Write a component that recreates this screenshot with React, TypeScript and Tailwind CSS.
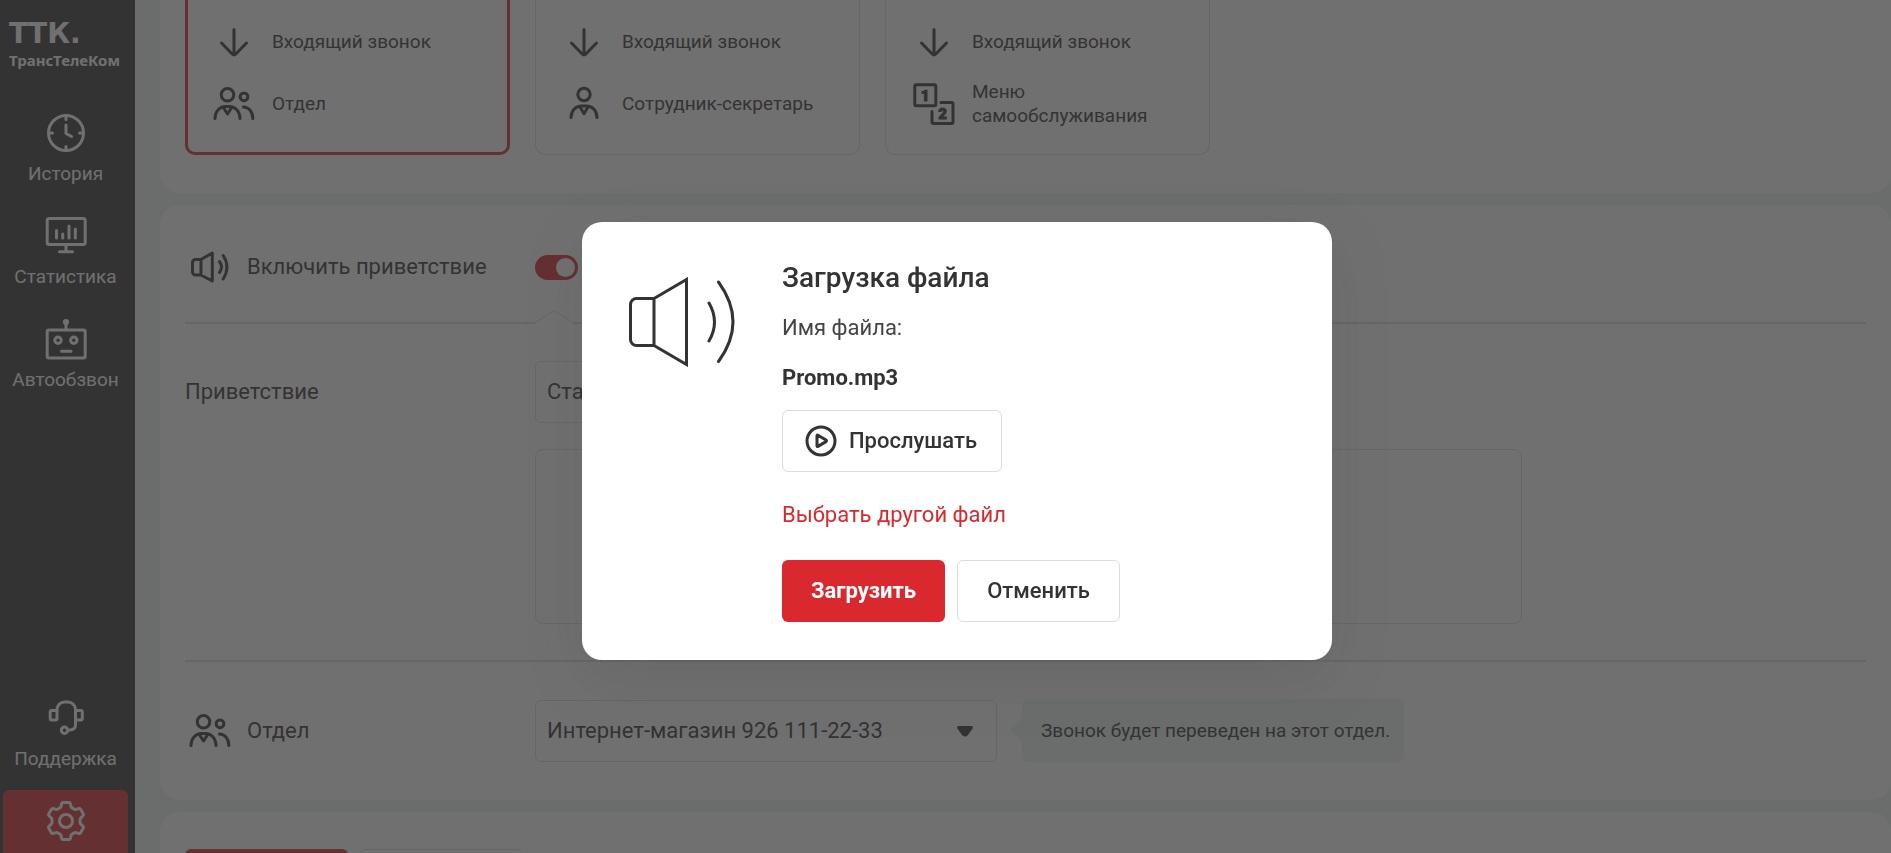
import type { ReactNode } from "react";

interface RouteCard {
    id: string;
    icon: () => ReactNode;
    title: string;
    selected?: boolean;
}

interface NavItem {
    icon: () => ReactNode;
    title: string;
}

function Icon({ children }: { children: ReactNode }) {
    return (
        <svg
            viewBox="0 0 42 42"
            className="h-[42px] w-[42px] shrink-0"
            fill="none"
            stroke="currentColor"
            strokeWidth="3"
            strokeLinecap="round"
            strokeLinejoin="round"
            aria-hidden="true"
        >
            {children}
        </svg>
    );
}

const ArrowIcon = () => (
    <Icon>
        <path d="M21 8.5V34M8.5 22l10.7 11q1.8 1.6 3.6 0L33.5 22" />
    </Icon>
);

const PeopleIcon = () => (
    <Icon>
        <circle cx="14.5" cy="11.8" r="6.3" />
        <circle cx="31" cy="13.8" r="3.9" />
        <path d="M2 35.5c0-7 4.6-12 10.5-12h4c5.9 0 10.5 5 10.5 12" />
        <path d="M10.3 24.5l4.200 6.5 4.200-6.5" />
        <path d="M30.500 24c5.500.3 9.300 5 9.300 11.500" />
    </Icon>
);

const PersonIcon = () => (
    <Icon>
        <circle cx="21" cy="11.5" r="6.2" />
        <path d="M8 34.5c0-6.8 4.600-11.500 10.500-11.500h5c5.900 0 10.500 4.700 10.500 11.500" />
        <path d="M17 24l4 6.800 4-6.800" />
    </Icon>
);

const MenuIcon = () => (
    <Icon>
        <rect x="1.8" y="1.8" width="21" height="21" rx="1.5" />
        <path d="M28 19.500h10.500a1.500 1.500 0 0 1 1.500 1.500v18a1.500 1.500 0 0 1-1.500 1.500h-18a1.500 1.500 0 0 1-1.500-1.500v-10.500" />
        <g fill="currentColor" strokeWidth="1" fontFamily="Roboto, sans-serif" fontSize="15" fontWeight="900" textAnchor="middle">
            <text x="12" y="17.5">1</text>
            <text x="29.5" y="35.5">2</text>
        </g>
    </Icon>
);

const SpeakerIcon = () => (
    <Icon>
        <path d="M12 13.500H6.500a3 3 0 0 0-3 3v9.500a3 3 0 0 0 3 3H12zM12 13.500L23.300 7v28L12 29z" />
        <path d="M30.500 15.500q4 5.500 0 11M34.200 9.500q7.500 11.500 0 23.500" />
    </Icon>
);

const ClockIcon = () => (
    <Icon>
        <circle cx="21" cy="21" r="17.5" />
        <path d="M21 13v8.500l5.500 3M21 4.500v3M21 34.500v3M4.500 21h3M34.500 21h3" />
    </Icon>
);

const StatsIcon = () => (
    <Icon>
        <rect x="2.2" y="3.5" width="38" height="26" rx="2" />
        <path d="M21 30v6M14.500 36.800h13M11.500 15.500v7.500M17.700 19v4M24 11v12M30.300 14v9" />
    </Icon>
);

const RobotIcon = () => (
    <Icon>
        <circle cx="21" cy="4" r="1.6" />
        <path d="M21 5v6M16.500 33.300h9.500" />
        <rect x="2.2" y="12" width="38" height="28" rx="1.5" />
        <circle cx="13" cy="22.3" r="3.2" />
        <circle cx="28.8" cy="22.3" r="3.2" />
    </Icon>
);

const HeadsetIcon = () => (
    <Icon>
        <path d="M12 14v-1.500a7.500 7.500 0 0 1 7.500-7.500h3.500a7.500 7.500 0 0 1 7.500 7.500V28c0 3.500-3 5.300-7.500 5.300" />
        <rect x="5.2" y="13.5" width="6.8" height="9.5" rx="1.5" />
        <rect x="30.5" y="13.5" width="6.8" height="9.5" rx="1.5" />
        <circle cx="19.5" cy="33.3" r="3.2" />
    </Icon>
);

const GearIcon = () => (
    <Icon>
        <path
            transform="translate(21 21)"
            d="M-3-18.500H3q1 0 1.300 1l.7 3q.3 1 1.200 1.500l2 1.100q1 .6 1.900.3l3-.9q1-.2 1.500.7l2.700 4.700q.5 1-.2 1.700l-2.300 2.200q-.8.700-.8 1.700V1.500q0 1 .8 1.700l2.300 2.200q.7.700.2 1.700l-2.700 4.700q-.5.900-1.500.7l-3-.9q-1-.3-1.900.3l-2 1.100q-.9.500-1.200 1.500l-.7 3q-.3 1-1.300 1H-3q-1 0-1.300-1l-.7-3q-.3-1-1.200-1.500l-2-1.100q-1-.6-1.900-.3l-3 .9q-1 .2-1.500-.7l-2.700-4.700q-.5-1 .2-1.700l2.300-2.200q.8-.7.800-1.700v-3q0-1-.8-1.700l-2.300-2.200q-.7-.7-.2-1.700l2.700-4.700q.5-.9 1.500-.7l3 .9q1 .3 1.900-.3l2-1.100q.9-.5 1.200-1.500l.7-3q.3-1 1.300-1z"
        />
        <circle cx="21" cy="21" r="6.5" />
    </Icon>
);

const routeCards: RouteCard[] = [
    { id: "department", icon: PeopleIcon, title: "Отдел", selected: true },
    { id: "secretary", icon: PersonIcon, title: "Сотрудник-секретарь" },
    { id: "menu", icon: MenuIcon, title: "Меню самообслуживания" },
];

const topLinks: NavItem[] = [
    { icon: ClockIcon, title: "История" },
    { icon: StatsIcon, title: "Статистика" },
    { icon: RobotIcon, title: "Автообзвон" },
];

function NavLink({ icon: NavIcon, title }: NavItem) {
    return (
        <a href="#" className="flex h-[100px] w-[125px] flex-col items-center gap-2 pt-[10px] text-[19px] leading-6 text-white">
            <NavIcon />
            {title}
        </a>
    );
}

function Sidebar() {
    return (
        <aside className="flex w-[135px] shrink-0 flex-col bg-[#333] pl-[3px]">
            <div className="h-[102px] pt-5 pl-[6px] text-white">
                <div className="font-['DejaVu_Sans',sans-serif] text-[28px] leading-7 font-bold">ТТК.</div>
                <div className="font-['Noto_Sans',sans-serif] text-[15px] leading-6 font-bold">ТрансТелеКом</div>
            </div>
            <nav className="flex flex-col gap-[3px]">
                {topLinks.map((link) => (
                    <NavLink key={link.title} {...link} />
                ))}
            </nav>
            <nav className="mt-auto flex flex-col gap-[3px]">
                <NavLink icon={HeadsetIcon} title="Поддержка" />
                <a href="#" aria-label="Настройки" className="flex h-[63px] w-[125px] justify-center rounded-t-md bg-[#d9282e] pt-[10px] text-white">
                    <GearIcon />
                </a>
            </nav>
        </aside>
    );
}

function Select({ id, value }: { id: string; value: string }) {
    return (
        <div className="relative h-[62px] w-[462px]">
            <select id={id} className="h-full w-full appearance-none rounded-md border border-[#ddd] bg-white pr-12 pl-[11px] text-[22px] text-[#333]">
                <option>{value}</option>
            </select>
            <svg viewBox="0 0 16 11" className="pointer-events-none absolute top-[26px] right-6 h-[11px] w-4" fill="#333" aria-hidden="true">
                <path d="M1.500 0h13q2 .3 1.200 2.300L11 9q-3 3-6 0L.3 2.300Q-.5.3 1.500 0z" />
            </svg>
        </div>
    );
}

function UploadDialog() {
    return (
        <div className="fixed inset-0 flex items-center justify-center bg-[#333]/70 pt-[29px] pl-[23px]">
            <div
                role="dialog"
                aria-modal="true"
                aria-labelledby="upload-title"
                className="flex h-[438px] w-[750px] rounded-[20px] bg-white pt-9 pl-[46px] shadow-[0_20px_60px_rgba(51,60,56,0.15)]"
            >
                <svg
                    viewBox="0 0 108 90"
                    className="mt-[19px] h-[90px] w-[108px] shrink-0"
                    fill="none"
                    stroke="#333"
                    strokeWidth="3"
                    strokeLinecap="round"
                    aria-hidden="true"
                >
                    <path d="M26 21.500H8.500a6 6 0 0 0-6 6v35a6 6 0 0 0 6 6H26zM26 21.500L58.500 2.500v85L26 68.500" />
                    <path d="M81 26q11 19 0 38M90.500 5q29 40 0 79.500" />
                </svg>
                <div className="ml-[46px] flex flex-col items-start text-[22px] leading-[26px] text-[#333]">
                    <h2 id="upload-title" className="text-[28px] leading-10 font-medium">Загрузка файла</h2>
                    <p className="mt-[17px] text-[#444]">Имя файла:</p>
                    <p className="mt-6 font-bold">Promo.mp3</p>
                    <button className="mt-[19px] flex h-[62px] w-[220px] items-center gap-3 rounded-md border border-[#ddd] pl-[22px] font-medium">
                        <svg viewBox="0 0 32 32" className="h-8 w-8" fill="none" stroke="currentColor" strokeWidth="3" strokeLinejoin="round" aria-hidden="true">
                            <circle cx="16" cy="16" r="14" />
                            <path d="M12 10.800q0-1.200 1-.6l8 4.800q1 .8 0 1.600l-8 4.800q-1 .6-1-.6z" />
                        </svg>
                        Прослушать
                    </button>
                    <a href="#" className="mt-[30px] text-[#d9282e]">Выбрать другой файл</a>
                    <div className="mt-8 flex gap-3 font-medium">
                        <button className="h-[62px] w-[163px] rounded-md bg-[#d9282e] font-bold text-white">Загрузить</button>
                        <button className="h-[62px] w-[163px] rounded-md border border-[#ddd]">Отменить</button>
                    </div>
                </div>
            </div>
        </div>
    );
}

export default function App() {
    return (
        <div className="flex h-screen overflow-hidden bg-[#ebf4f1] font-['Roboto',sans-serif] text-[22px] leading-[26px] text-[#333]">
            <Sidebar />
            <main className="flex min-w-0 flex-1 flex-col gap-3 overflow-hidden pl-[25px]">
                <section className="flex shrink-0 gap-[25px] rounded-b-[20px] bg-white px-[25px] pb-[38px]">
                    {routeCards.map(({ id, icon: CardIcon, title, selected }) => (
                        <div
                            key={id}
                            className={`flex h-[155px] w-[325px] flex-col gap-5 rounded-b-[10px] pt-[21px] text-[19px] leading-6 ${
                                selected ? "border-x-3 border-b-3 border-[#d9282e] pl-[25px]" : "border-x border-b border-[#ddd] pl-[27px]"
                            }`}
                        >
                            <div className="flex h-[42px] items-center gap-[17px]">
                                <ArrowIcon />
                                Входящий звонок
                            </div>
                            <div className="flex h-[42px] items-center gap-[17px] pr-10">
                                <CardIcon />
                                {title}
                            </div>
                        </div>
                    ))}
                </section>

                <section className="shrink-0 rounded-[20px] bg-white px-[25px] pb-[38px]">
                    <div className="relative flex h-[119px] items-center border-b-2 border-[#ddd] pt-[7px]">
                        <label htmlFor="greeting-on" className="flex w-[350px] items-center gap-4 pl-1">
                            <SpeakerIcon />
                            Включить приветствие
                        </label>
                        <input
                            id="greeting-on"
                            type="checkbox"
                            defaultChecked
                            className="h-[25px] w-[43px] appearance-none rounded-full bg-[#ccc] p-[3px] before:block before:h-[19px] before:w-[19px] before:rounded-full before:bg-white checked:bg-[#d9282e] checked:before:ml-[18px]"
                        />
                        {/* pointer from the settings below up to the switch */}
                        <svg viewBox="0 0 38 14" className="absolute -bottom-[2px] left-[350px] h-[14px] w-[38px]" aria-hidden="true">
                            <path d="M0 12v2h38v-2L19 0z" fill="#fff" />
                            <path d="M0 12.500L17.500 1.500q1.500-1 3 0L38 12.500" fill="none" stroke="#ddd" />
                        </svg>
                    </div>

                    <div className="flex items-start border-b-2 border-[#ddd] pt-[37px] pb-9">
                        <label htmlFor="greeting" className="w-[350px] pt-[18px]">Приветствие</label>
                        <div className="flex flex-col gap-[26px]">
                            <Select id="greeting" value="Стандартное" />
                            <div className="h-[175px] w-[987px] rounded-lg border border-[#ddd]" />
                        </div>
                    </div>

                    <div className="flex items-center pt-[37px]">
                        <label htmlFor="department" className="flex w-[350px] items-center gap-4 pl-1">
                            <PeopleIcon />
                            Отдел
                        </label>
                        <Select id="department" value="Интернет-магазин 926 111-22-33" />
                        <div className="relative ml-[25px] flex h-[63px] w-[382px] items-center rounded-md bg-[#ebf4f1] pl-[19px] text-[19px] whitespace-nowrap">
                            <svg viewBox="0 0 12 24" className="absolute top-[19px] -left-3 h-6 w-3" fill="#ebf4f1" aria-hidden="true">
                                <path d="M12 0v24L1 13q-1-1 0-2z" />
                            </svg>
                            Звонок будет переведен на этот отдел.
                        </div>
                    </div>
                </section>

                <section className="flex shrink-0 gap-3 rounded-t-[20px] bg-white px-[25px] pt-[37px]">
                    <button aria-label="Сохранить" className="h-[62px] w-[163px] rounded-md bg-[#d9282e]" />
                    <button aria-label="Отменить" className="h-[62px] w-[163px] rounded-md border border-[#ddd]" />
                </section>
            </main>
            <UploadDialog />
        </div>
    );
}
